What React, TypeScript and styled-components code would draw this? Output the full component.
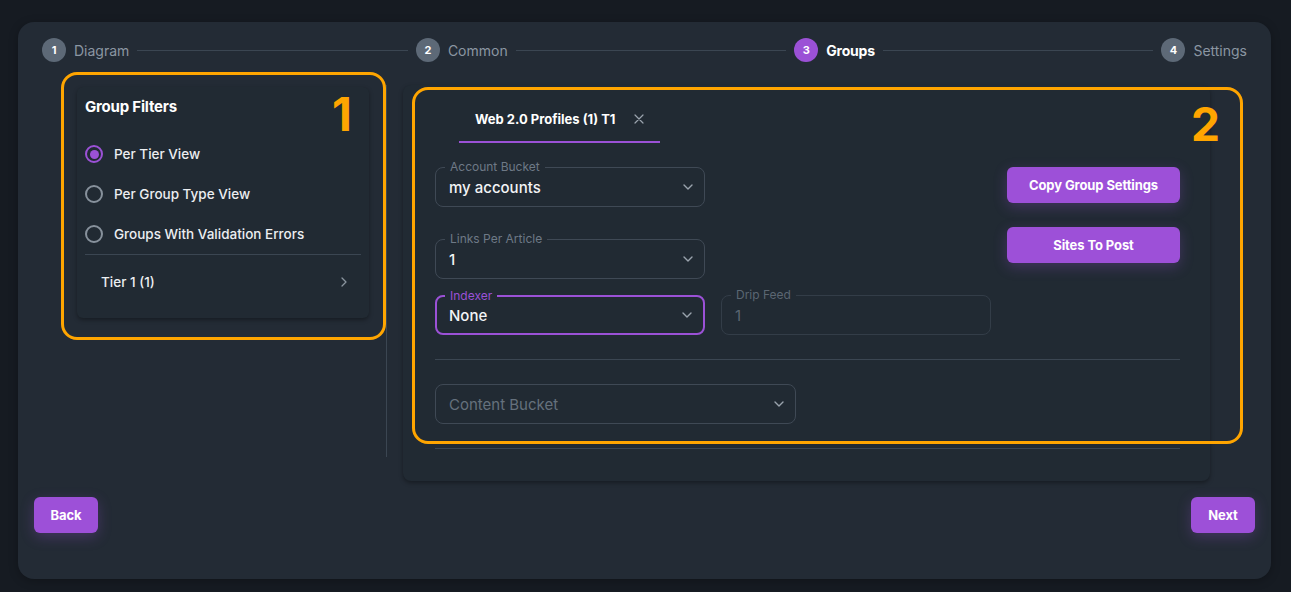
import React from 'react';
import styled, { createGlobalStyle } from 'styled-components';

const GlobalStyle = createGlobalStyle`
  html, body {
    margin: 0;
    padding: 0;
    background: #161b22;
  }
  body {
    font-family: Inter, "Noto Sans", sans-serif;
    color: #f1f2f4;
    -webkit-font-smoothing: antialiased;
  }
  * { box-sizing: border-box; }
`;

const purple = '#9b51d6';
const orange = '#ffa500';

const Page = styled.div`
  width: 1291px;
  height: 592px;
  padding: 22px 20px 13px 18px;
`;

const Card = styled.div`
  position: relative;
  height: 557px;
  background: #232b35;
  border-radius: 16px;
  padding: 16px 16px 0 16px;
  box-shadow: 0 2px 10px rgba(0, 0, 0, 0.25);
`;

const Stepper = styled.div`
  display: flex;
  align-items: center;
  height: 24px;
  padding: 0 8px;
`;

const Step = styled.div`
  display: flex;
  align-items: center;
  gap: 8px;
`;

const StepCircle = styled.div<{ $active?: boolean }>`
  width: 24px;
  height: 24px;
  border-radius: 50%;
  background: ${p => (p.$active ? purple : '#5d6977')};
  color: #fff;
  font-size: 11px;
  font-weight: 700;
  display: flex;
  align-items: center;
  justify-content: center;
`;

const StepLabel = styled.span<{ $active?: boolean }>`
  font-size: 14px;
  font-weight: ${p => (p.$active ? 700 : 400)};
  color: ${p => (p.$active ? '#ffffff' : '#8b96a2')};
  letter-spacing: ${p => (p.$active ? '-0.2px' : '0')};
`;

const StepLine = styled.div`
  flex: 1;
  height: 1px;
  background: #3b4652;
  margin: 0 8px;
`;

const Body = styled.div`
  display: flex;
  margin-top: 23px;
  padding-left: 27px;
`;

const LeftColumn = styled.div`
  width: 326px;
  height: 372px;
  border-right: 1px solid #3b4652;
  padding: 2px 17px 0 16px;
`;

const FilterCard = styled.div`
  background: #212a33;
  border-radius: 6px;
  box-shadow: 0 2px 4px rgba(0, 0, 0, 0.35);
  padding: 10px 8px 8px 8px;
`;

const FilterTitle = styled.h3`
  margin: 0 0 17px 0;
  font-size: 15px;
  line-height: 20px;
  font-weight: 700;
  color: #ffffff;
  letter-spacing: -0.2px;
`;

const RadioRow = styled.label`
  display: flex;
  align-items: center;
  gap: 11px;
  height: 40px;
  font-size: 13.5px;
  font-weight: 500;
  color: #eceef1;
`;

const RadioDot = styled.span<{ $checked?: boolean }>`
  width: 18px;
  height: 18px;
  border-radius: 50%;
  border: 2px solid ${p => (p.$checked ? purple : '#87919c')};
  display: flex;
  align-items: center;
  justify-content: center;

  &::after {
    content: '';
    width: 9px;
    height: 9px;
    border-radius: 50%;
    background: ${p => (p.$checked ? purple : 'transparent')};
  }
`;

const Divider = styled.div`
  height: 1px;
  background: #3b4652;
`;

const TierRow = styled.div`
  display: flex;
  align-items: center;
  justify-content: space-between;
  height: 55px;
  padding: 0 14px 2px 16px;
  font-size: 13.5px;
  font-weight: 500;
  color: #eceef1;
`;

const RightColumn = styled.div`
  padding-left: 16px;
`;

const GroupCard = styled.div`
  width: 807px;
  height: 396px;
  background: #212a33;
  border-radius: 8px;
  box-shadow: 0 2px 4px rgba(0, 0, 0, 0.35);
  padding: 10px 30px 0 32px;
`;

const TabBar = styled.div`
  display: flex;
  padding-left: 24px;
  margin-bottom: 24px;
`;

const Tab = styled.div`
  display: flex;
  align-items: center;
  gap: 19px;
  height: 48px;
  padding: 2px 16px 0 16px;
  border-bottom: 2px solid ${purple};
  font-size: 13px;
  font-weight: 700;
  color: #ffffff;
`;

const FormTop = styled.div`
  display: flex;
  gap: 16px;
`;

const FieldsArea = styled.div`
  width: 556px;
  display: flex;
  flex-direction: column;
`;

const FieldRow = styled.div<{ $mb?: number }>`
  display: flex;
  gap: 16px;
  margin-bottom: ${p => p.$mb ?? 0}px;
`;

const Field = styled.div<{ $width: number; $focused?: boolean; $disabled?: boolean }>`
  position: relative;
  width: ${p => p.$width}px;
  height: 40px;
  border-radius: 8px;
  border: ${p => (p.$focused ? `2px solid ${purple}` : `1px solid ${p.$disabled ? '#333d48' : '#3f4955'}`)};
  padding: 0 11px 0 ${p => (p.$focused ? 12 : 13)}px;
  display: flex;
  align-items: center;
  justify-content: space-between;
`;

const FieldLabel = styled.span<{ $focused?: boolean; $disabled?: boolean }>`
  position: absolute;
  top: -8px;
  left: ${p => (p.$focused ? 8 : 9)}px;
  padding: 0 5px;
  background: #212a33;
  font-size: 12px;
  line-height: 14px;
  color: ${p => (p.$focused ? purple : p.$disabled ? '#5b6672' : '#6e7986')};
`;

const FieldValue = styled.span<{ $placeholder?: boolean; $disabled?: boolean }>`
  font-size: 15px;
  font-weight: ${p => (p.$placeholder || p.$disabled ? 400 : 500)};
  color: ${p => (p.$placeholder ? '#65717d' : p.$disabled ? '#5b6672' : '#f3f4f6')};
`;

const ButtonStack = styled.div`
  width: 174px;
  display: flex;
  flex-direction: column;
  gap: 24px;
`;

const PurpleButton = styled.button<{ $width?: number }>`
  width: ${p => (p.$width ? `${p.$width}px` : '100%')};
  height: 36px;
  border: none;
  border-radius: 6px;
  background: #9d50d8;
  color: #ffffff;
  font-family: inherit;
  font-size: 13px;
  font-weight: 700;
  letter-spacing: -0.1px;
  box-shadow: 0 4px 14px rgba(155, 81, 214, 0.28);
  cursor: pointer;
`;

const SectionDivider = styled.div`
  height: 1px;
  background: #3b4652;
  margin: 24px 0;
`;

const Footer = styled.div`
  display: flex;
  justify-content: space-between;
  margin-top: 16px;
`;

const Annotation = styled.div<{ $l: number; $t: number; $w: number; $h: number }>`
  position: absolute;
  left: ${p => p.$l}px;
  top: ${p => p.$t}px;
  width: ${p => p.$w}px;
  height: ${p => p.$h}px;
  border: 3px solid ${orange};
  border-radius: 16px;
  pointer-events: none;
`;

const AnnotationNumber = styled.span<{ $l: number; $t: number }>`
  position: absolute;
  left: ${p => p.$l}px;
  top: ${p => p.$t}px;
  font-size: 46px;
  line-height: 46px;
  font-weight: 700;
  color: ${orange};
`;

const Chevron = ({ dir = 'down' }: { dir?: 'down' | 'right' }) =>
  dir === 'down' ? (
    <svg width="10" height="6" viewBox="0 0 10 6" fill="none">
      <path d="M1 1l4 4 4-4" stroke="#9aa3ad" strokeWidth="1.4" strokeLinecap="round" strokeLinejoin="round" />
    </svg>
  ) : (
    <svg width="6" height="10" viewBox="0 0 6 10" fill="none">
      <path d="M1 1l4 4-4 4" stroke="#8a949e" strokeWidth="1.3" strokeLinecap="round" strokeLinejoin="round" />
    </svg>
  );

const CloseIcon = () => (
  <svg width="10" height="10" viewBox="0 0 10 10" fill="none">
    <path d="M1 1l8 8M9 1L1 9" stroke="#9aa3ad" strokeWidth="1.2" strokeLinecap="round" />
  </svg>
);

type SelectProps = {
  label?: string;
  value: string;
  width: number;
  focused?: boolean;
  disabled?: boolean;
  placeholder?: boolean;
  arrow?: boolean;
};

const Select: React.FC<SelectProps> = ({ label, value, width, focused, disabled, placeholder, arrow = true }) => (
  <Field $width={width} $focused={focused} $disabled={disabled}>
    {label && (
      <FieldLabel $focused={focused} $disabled={disabled}>
        {label}
      </FieldLabel>
    )}
    <FieldValue $placeholder={placeholder} $disabled={disabled}>
      {value}
    </FieldValue>
    {arrow && <Chevron />}
  </Field>
);

const steps = [
  { n: 1, label: 'Diagram' },
  { n: 2, label: 'Common' },
  { n: 3, label: 'Groups', active: true },
  { n: 4, label: 'Settings' },
];

const filters = [
  { label: 'Per Tier View', checked: true },
  { label: 'Per Group Type View' },
  { label: 'Groups With Validation Errors' },
];

export default function App() {
  return (
    <Page>
      <GlobalStyle />
      <Card>
        <Stepper>
          {steps.map((s, i) => (
            <React.Fragment key={s.n}>
              <Step>
                <StepCircle $active={s.active}>{s.n}</StepCircle>
                <StepLabel $active={s.active}>{s.label}</StepLabel>
              </Step>
              {i < steps.length - 1 && <StepLine />}
            </React.Fragment>
          ))}
        </Stepper>

        <Body>
          <LeftColumn>
            <FilterCard>
              <FilterTitle>Group Filters</FilterTitle>
              {filters.map(f => (
                <RadioRow key={f.label}>
                  <RadioDot $checked={f.checked} />
                  {f.label}
                </RadioRow>
              ))}
              <Divider />
              <TierRow>
                <span>Tier 1 (1)</span>
                <Chevron dir="right" />
              </TierRow>
            </FilterCard>
          </LeftColumn>

          <RightColumn>
            <GroupCard>
              <TabBar>
                <Tab>
                  <span>Web 2.0 Profiles (1) T1</span>
                  <CloseIcon />
                </Tab>
              </TabBar>

              <FormTop>
                <FieldsArea>
                  <FieldRow $mb={32}>
                    <Select label="Account Bucket" value="my accounts" width={270} />
                  </FieldRow>
                  <FieldRow $mb={16}>
                    <Select label="Links Per Article" value="1" width={270} />
                  </FieldRow>
                  <FieldRow>
                    <Select label="Indexer" value="None" width={270} focused />
                    <Select label="Drip Feed" value="1" width={270} disabled arrow={false} />
                  </FieldRow>
                </FieldsArea>
                <ButtonStack>
                  <PurpleButton>Copy Group Settings</PurpleButton>
                  <PurpleButton>Sites To Post</PurpleButton>
                </ButtonStack>
              </FormTop>

              <SectionDivider />
              <Select value="Content Bucket" width={361} placeholder />
              <SectionDivider />
            </GroupCard>
          </RightColumn>
        </Body>

        <Footer>
          <PurpleButton $width={64}>Back</PurpleButton>
          <PurpleButton $width={64}>Next</PurpleButton>
        </Footer>

        <Annotation $l={43} $t={50} $w={325} $h={268} />
        <AnnotationNumber $l={314} $t={69}>1</AnnotationNumber>
        <Annotation $l={394} $t={65} $w={831} $h={357} />
        <AnnotationNumber $l={1173} $t={79}>2</AnnotationNumber>
      </Card>
    </Page>
  );
}
